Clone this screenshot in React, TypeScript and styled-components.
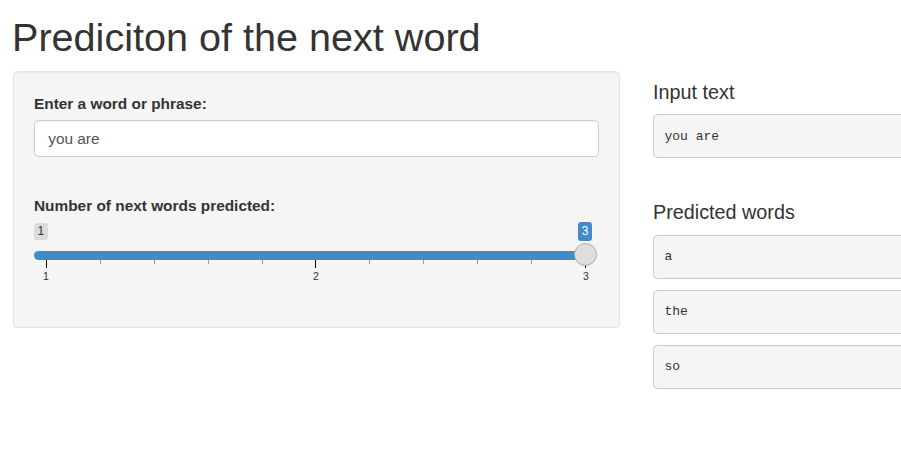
import * as React from "react";
import styled, { createGlobalStyle } from "styled-components";

const GlobalStyle = createGlobalStyle`
  html, body {
    margin: 0;
    padding: 0;
    background: #fff;
  }
  body {
    font-family: "Liberation Sans", Arial, sans-serif;
    font-size: 15.4px;
    color: #333;
  }
  * {
    box-sizing: border-box;
  }
`;

const Page = styled.div`
  width: 901px;
  height: 467px;
  overflow: hidden;
  padding: 16px 0 0 13px;
`;

const Title = styled.h1`
  margin: 0 0 11px -1px;
  font-size: 39.6px;
  font-weight: normal;
  line-height: 1.1;
  color: #333;
`;

const Layout = styled.div`
  display: flex;
  align-items: flex-start;
  gap: 33px;
`;

const Well = styled.div`
  flex: none;
  width: 607px;
  padding: 21px 20px 20px;
  background: #f5f5f5;
  border: 1px solid #e3e3e3;
  border-radius: 4.4px;
  box-shadow: inset 0 1px 1px rgba(0, 0, 0, 0.05);
`;

const FormGroup = styled.div`
  margin-bottom: 37.5px;
  &:last-child {
    margin-bottom: 0;
  }
`;

const Label = styled.label`
  display: block;
  font-weight: bold;
  line-height: 22px;
  margin-bottom: 5.5px;
`;

const TextInput = styled.input`
  display: block;
  width: 100%;
  height: 37.4px;
  padding: 6.6px 13.2px;
  font-family: inherit;
  font-size: 15.4px;
  color: #555;
  background: #fff;
  border: 1px solid #ccc;
  border-radius: 4.4px;
  box-shadow: inset 0 1px 1px rgba(0, 0, 0, 0.075);
  outline: none;
`;

const Slider = styled.div`
  position: relative;
  margin-top: 5px;
  padding-bottom: 24px;
`;

const TagRow = styled.div`
  display: flex;
  justify-content: space-between;
  align-items: center;
  height: 19px;
  padding-right: 7px;
`;

const Tag = styled.span<{ $active?: boolean }>`
  font-size: 12px;
  line-height: 15px;
  padding: ${({ $active }) => ($active ? "2px 3.5px" : "1px 3.5px")};
  border-radius: 3px;
  background: ${({ $active }) => ($active ? "#428bca" : "rgba(0, 0, 0, 0.1)")};
  color: ${({ $active }) => ($active ? "#fff" : "#333")};
`;

const Track = styled.div`
  margin: 10px 4px 0 0;
  height: 9px;
  border-radius: 4.5px;
  background: #428bca;
`;

const Handle = styled.div`
  position: absolute;
  right: 2px;
  top: 21px;
  width: 23px;
  height: 23px;
  border-radius: 50%;
  background: #dedede;
  border: 1px solid #ababab;
  z-index: 2;
`;

const Ticks = styled.div`
  display: flex;
  justify-content: space-between;
  padding: 0 13px 0 12px;
  height: 8px;
`;

const Tick = styled.span<{ $major?: boolean }>`
  width: 1px;
  height: ${({ $major }) => ($major ? "8px" : "3.5px")};
  background: ${({ $major }) => ($major ? "#000" : "#999")};
`;

const GridLabels = styled.div`
  display: flex;
  justify-content: space-between;
  padding: 0 8px 0 7px;
  margin-top: 2px;
`;

const GridLabel = styled.span`
  width: 10px;
  text-align: center;
  font-size: 10.5px;
  line-height: 13px;
  color: #333;
`;

const Main = styled.div`
  flex: none;
  width: 320px;
`;

const Section = styled.div`
  padding-bottom: 22px;
`;

const SectionTitle = styled.h4`
  margin: 11px 0;
  font-size: 19.8px;
  font-weight: normal;
  line-height: 1.1;
  color: #333;
`;

const Output = styled.pre`
  margin: 0 0 11px;
  padding: 10.45px;
  font-family: "Liberation Mono", "DejaVu Sans Mono", monospace;
  font-size: 13px;
  line-height: 21px;
  color: #333;
  background: #f5f5f5;
  border: 1px solid #ccc;
  border-radius: 4.4px;
`;

const predicted = ["a", "the", "so"];

export default function App() {
  return (
    <Page>
      <GlobalStyle />
      <Title>Prediciton of the next word</Title>
      <Layout>
        <Well>
          <FormGroup>
            <Label>Enter a word or phrase:</Label>
            <TextInput type="text" defaultValue="you are" />
          </FormGroup>
          <FormGroup>
            <Label>Number of next words predicted:</Label>
            <Slider>
              <TagRow>
                <Tag>1</Tag>
                <Tag $active>3</Tag>
              </TagRow>
              <Track />
              <Handle />
              <Ticks>
                {Array.from({ length: 11 }, (_, i) => (
                  <Tick key={i} $major={i % 5 === 0} />
                ))}
              </Ticks>
              <GridLabels>
                <GridLabel>1</GridLabel>
                <GridLabel>2</GridLabel>
                <GridLabel>3</GridLabel>
              </GridLabels>
            </Slider>
          </FormGroup>
        </Well>
        <Main>
          <Section>
            <SectionTitle>Input text</SectionTitle>
            <Output>you are</Output>
          </Section>
          <Section>
            <SectionTitle>Predicted words</SectionTitle>
            {predicted.map(w => (
              <Output key={w}>{w}</Output>
            ))}
          </Section>
        </Main>
      </Layout>
    </Page>
  );
}
